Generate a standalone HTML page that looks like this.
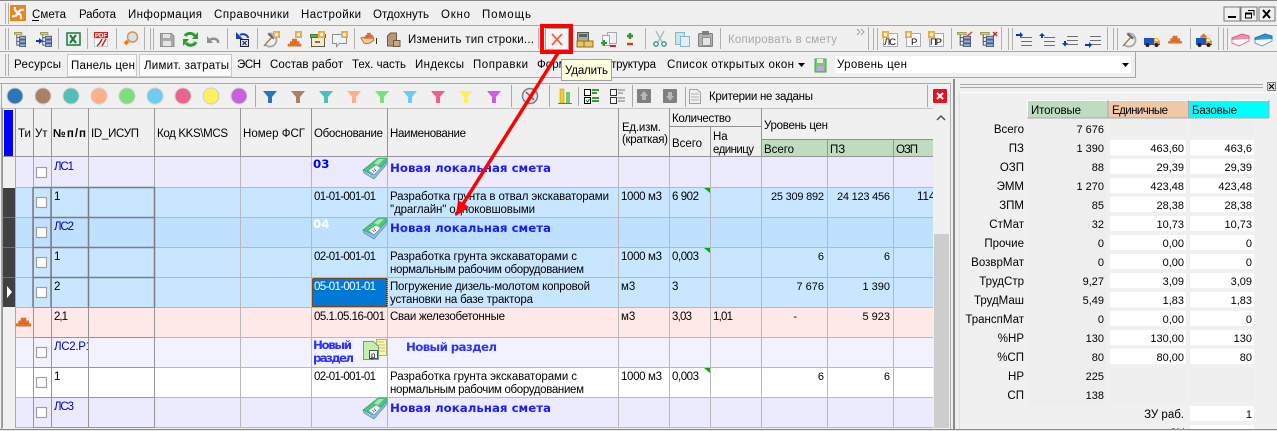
<!DOCTYPE html>
<html><head><meta charset="utf-8"><style>
html,body{margin:0;padding:0;background:#f0f0f0;width:1277px;height:431px;overflow:hidden}
svg{display:block}
text{font-family:"Liberation Sans","DejaVu Sans",sans-serif;font-size:11.5px;fill:#000}
.b{font-family:"DejaVu Sans","Liberation Sans",sans-serif;font-weight:bold;font-size:11.8px;fill:#1a1aff}
.g{fill:#a8a8a8}
.e{text-anchor:end;font-size:11px}
.l{font-size:11.5px}
.bl{fill:#0000c8}
</style></head><body>
<svg width="1277" height="431" viewBox="0 0 1277 431" xmlns="http://www.w3.org/2000/svg">
<defs>
<clipPath id="gc"><rect x="0" y="108" width="933" height="320"/></clipPath>
<clipPath id="rc"><rect x="955" y="93" width="322" height="336"/></clipPath>
<symbol id="tree" viewBox="0 0 13 16" preserveAspectRatio="none" overflow="visible"><rect x=".5" y=".5" width="8" height="2" fill="#e8e050" stroke="#9a9a50"/><path d="M3 3V14.500M3 6H6M3 10H6M3 14H6" stroke="#556" fill="none"/><path d="M6 4.500h6.500v3H6zM6 8.500h6.500v3H6zM6 12.500h6.500v3H6z" fill="#9ab0d4" stroke="#4a6088"/></symbol>
<symbol id="gear" viewBox="0 0 8 8" overflow="visible"><rect width="8" height="8" fill="#f4a83e"/><circle cx="4" cy="4" r="2" fill="#fff"/></symbol>
<symbol id="brick" viewBox="0 0 18 11" overflow="visible"><path d="M6 0h6v3H6zM3 3.500h6v3H3zM9.500 3.500h6v3h-6zM0 7h6v3H0zM6.500 7h5.500v3H6.500zM12.500 7H18v3h-5.500z" fill="#ec7428" stroke="#c05010" stroke-width=".5"/></symbol>
<symbol id="truck" viewBox="0 0 16 11" overflow="visible"><path d="M0 2h10v6H0z" fill="#1458c8"/><path d="M10 2h3l3 3v3h-6z" fill="#e8a030"/><path d="M11 3h2l1.500 2H11z" fill="#e8f4ff"/><path d="M0 8h16v1H0z" fill="#555"/><circle cx="3.500" cy="9" r="2" fill="#222"/><circle cx="12.500" cy="9" r="2" fill="#222"/></symbol>
<symbol id="hammer" viewBox="0 0 16 16" overflow="visible"><path d="M5 2a7 7 0 1 1-3 11" fill="none" stroke="#aaa" stroke-width="2"/><path d="M1 15L10 5" stroke="#a07840" stroke-width="1.500"/><path d="M6 2l6 5" stroke="#666" stroke-width="2.500"/></symbol>
<symbol id="note" viewBox="0 0 24 21" overflow="visible"><path d="M0 12L15 0h9v3L11 17z" fill="#4fc47c" stroke="#2c9a60" stroke-width=".6"/><path d="M11 5l5-4h5l-6 6z" fill="#a0eab8"/><path d="M6 12.500l7-5 5 3-7 6z" fill="#fff"/><path d="M9.500 12.500l3-2M10.500 14l3-2" stroke="#222" stroke-dasharray="1 1"/><path d="M0 12l11 5L24 3v3L11 21 1 15z" fill="#8cc0e4" stroke="#5c8cb0" stroke-width=".7"/></symbol>
<symbol id="fil" viewBox="0 0 14 12" overflow="visible"><path d="M0 0h14L9 6v6H5V6z"/></symbol>
</defs>

<rect width="1277" height="431" fill="#f0f0f0"/>
<!-- frame lines -->
<rect x="0" y="0" width="1277" height="1" fill="#888"/>
<rect x="0" y="25" width="1277" height="1" fill="#a8a8a8"/>
<rect x="0" y="51" width="1277" height="1" fill="#a8a8a8"/>
<rect x="0" y="77" width="1135" height="1" fill="#a8a8a8"/>
<rect x="1135" y="52" width="1" height="26" fill="#a8a8a8"/>
<rect x="0" y="83" width="951" height="1" fill="#a8a8a8"/>
<!-- grips -->
<path d="M5.500 3V24M8.500 3V24M5.500 28V50M8.500 28V50M5.500 54V76M8.500 54V76M150.500 28V50M153.500 28V50M873.500 28V50M877.500 28V50M1008.500 28V50M1012.500 28V50M1113.500 28V50M1117.500 28V50M1223.500 28V50M1227.500 28V50" stroke="#b0b0b0" fill="none"/>
<!-- app logo -->
<rect x="10" y="5" width="16" height="16" fill="#ec8420"/>
<path d="M18 13Q14 11 15 7M18 13Q20 9 24 10M18 13Q22 15 21 19M18 13Q16 17 12 16" stroke="#fff" stroke-width="2.200" fill="none"/>
<!-- menu -->
<text x="32" y="18" textLength="34">Смета</text><rect x="32" y="20" width="7" height="1"/>
<text x="79" y="18" textLength="37">Работа</text>
<text x="128" y="18" textLength="74">Информация</text>
<text x="214" y="18" textLength="75">Справочники</text>
<text x="301" y="18" textLength="60">Настройки</text>
<text x="373" y="18" textLength="56">Отдохнуть</text>
<text x="441" y="18" textLength="29">Окно</text>
<text x="482" y="18" textLength="49">Помощь</text>
<!-- window controls -->
<rect x="1224" y="7" width="16" height="14" fill="#f0f0f0" stroke="#777"/><rect x="1241" y="7" width="16" height="14" fill="#f0f0f0" stroke="#777"/><rect x="1259" y="7" width="16" height="14" fill="#f0f0f0" stroke="#777"/>
<rect x="1228" y="16" width="8" height="2"/>
<path d="M1248 10.500h6v5M1245.500 13h6v5h-6zM1245.500 14h6" fill="none" stroke="#000"/>
<path d="M1263 10l7 8M1270 10l-7 8" stroke="#000" stroke-width="2"/>

<!-- toolbar 1 separators -->
<path d="M58.500 28V49M87.500 28V49M116.500 28V49M144.500 27V50M227.500 28V49M257.500 28V49M354.500 28V49M538.500 28V49M645.500 28V49M720.500 28V49M868.500 27V50M951.500 28V49M1001.500 27V50M1107.500 27V50M1190.500 28V49M1218.500 27V50" stroke="#b0b0b0" fill="none"/>
<!-- toolbar 1 icons -->
<use href="#tree" x="14" y="32" width="12" height="15"/>
<use href="#tree" x="40" y="32" width="12" height="15"/>
<path d="M36 41h4" stroke="#0838c8" stroke-width="2"/><path d="M39 38l4 3-4 3z" fill="#0838c8"/>
<rect x="67" y="33" width="13" height="12" fill="#e4f0e4" stroke="#207840" stroke-width="1.500"/><path d="M70 35l6 8M76 35l-6 8" stroke="#207840" stroke-width="2"/>
<rect x="94" y="32" width="14" height="6" fill="#d82020"/><text x="95" y="37.500" style="font-size:6px;font-weight:bold;fill:#fff">PDF</text><rect x="94.500" y="38.500" width="13" height="8" fill="#fff" stroke="#ccc"/><path d="M97 46q4-4 5-7M102 46q2-4 4-7" stroke="#d02020" stroke-width="1.500" fill="none"/>
<path d="M125 44l3-3" stroke="#e07820" stroke-width="3.500"/><circle cx="132.500" cy="37" r="5" fill="#cfe4f4" stroke="#e09040" stroke-width="1.500"/>
<path d="M160.500 33.500h11l2.500 2.500v10.500h-13.500z" fill="#a8a8a8" stroke="#909090"/><rect x="163" y="34" width="7" height="4" fill="#e4e4e4"/><rect x="163" y="41" width="8" height="5" fill="#e4e4e4"/>
<path d="M185 36a6 6 0 0 1 10 0M196 42a6 6 0 0 1-10 1" stroke="#28a028" stroke-width="3" fill="none"/><path d="M198 32v7h-6zM183 46v-7h6z" fill="#28a028"/>
<path d="M209 41a5 4 0 0 1 9 0v2" stroke="#909090" stroke-width="2.500" fill="none"/><path d="M207 36v7h6z" fill="#909090"/>
<path d="M240 35a5 4 0 0 1 8 3" stroke="#1840c0" stroke-width="2" fill="none"/><path d="M236 32v7h7z" fill="#1840c0"/>
<rect x="240.500" y="39.500" width="8" height="7" fill="#dde" stroke="#224"/><path d="M242.500 41l4 4M246.500 41l-4 4" stroke="#224"/>
<use href="#hammer" x="263" y="32" width="15" height="15"/><use href="#gear" x="273" y="31" width="7" height="7"/>
<use href="#brick" x="286" y="39" width="17" height="8"/><use href="#gear" x="295" y="31" width="7" height="7"/>
<rect x="310.500" y="34.500" width="15" height="3" fill="#5ca85c" stroke="#408040"/><rect x="311.500" y="37.500" width="13" height="9" fill="#f4ecc8" stroke="#606040"/><path d="M315 42h5" stroke="#000"/><use href="#gear" x="318" y="31" width="7" height="7"/>
<path d="M332.500 34.500h14v9h-7l-3 3v-3h-4z" fill="#eaf6fa" stroke="#909090"/><use href="#gear" x="341" y="31" width="7" height="7"/>
<path d="M361 38q7-2 12 0l1 2q-5 5-10 3z" fill="#f4d0a0" stroke="#c87030"/><use href="#brick" x="364" y="33" width="10" height="6"/><path d="M376.500 38v6" stroke="#333"/>
<path d="M387.500 36l3-3h6v8h-3v5h-6z" fill="#b89878" stroke="#705840"/><rect x="393.500" y="40.500" width="6.500" height="6" fill="#c8a888" stroke="#705840"/>
<text x="408" y="43" textLength="126">Изменить тип строки...</text>
<rect x="545.500" y="28.500" width="23" height="21" fill="#f4f4f4" stroke="#a8a8a8"/>
<path d="M552 34l10 11M562 34l-10 11" stroke="#f06040" stroke-width="1.700"/>
<rect x="577.500" y="32.500" width="11" height="11" fill="#b8a888" stroke="#605840"/><rect x="579" y="34" width="8" height="3" fill="#406878"/><path d="M583 41h10v6H583z" fill="#e8c860" stroke="#907020"/><path d="M577 41h7v6h-7z" fill="#e8c860" stroke="#907020"/>
<rect x="607.500" y="32.500" width="9" height="11" fill="#eef" stroke="#aaa"/><path d="M602.500 35.500h7v10h-7z" fill="#fff" stroke="#aaa"/><path d="M601 43h6M604 40v6" stroke="#28a028" stroke-width="2"/><path d="M610 46h6" stroke="#d82020" stroke-width="2"/>
<path d="M627 36h6M630 33v6" stroke="#30902c" stroke-width="2.500"/><path d="M627 44h6" stroke="#d84020" stroke-width="2.500"/>
<path d="M656 31l6 11M664 31l-6 11" stroke="#a8c0c0" stroke-width="1.500"/><circle cx="656" cy="44" r="2.200" fill="none" stroke="#309090" stroke-width="1.300"/><circle cx="664" cy="44" r="2.200" fill="none" stroke="#309090" stroke-width="1.300"/>
<rect x="675.500" y="32.500" width="9" height="12" fill="#c8e4ec" stroke="#88b4c4"/><rect x="680.500" y="36.500" width="9" height="10" fill="#e0f0f4" stroke="#88b4c4"/>
<rect x="698.500" y="33.500" width="14" height="13" rx="1" fill="#b0b0b0" stroke="#808080"/><rect x="702" y="31" width="7" height="4" fill="#808080"/><rect x="702.500" y="37.500" width="8" height="8" fill="#e4e4e4" stroke="#909090"/>
<text x="728" y="43" textLength="109" class="g">Копировать в смету</text>
<path d="M857 29l3 3-3 3M861 29l3 3-3 3" stroke="#a0a0a0" fill="none"/>
<rect x="883.500" y="33.500" width="14" height="13" fill="#fff" stroke="#a8a8c0"/><use href="#gear" x="882" y="31" width="7" height="7"/><text x="884" y="45" style="font-size:9.500px" textLength="12">ЛС</text>
<rect x="906.500" y="33.500" width="14" height="13" fill="#fff" stroke="#a8a8c0"/><use href="#gear" x="905" y="31" width="7" height="7"/><text x="911" y="45" style="font-size:9.500px">Р</text>
<rect x="929.500" y="33.500" width="14" height="13" fill="#fff" stroke="#a8a8c0"/><use href="#gear" x="928" y="31" width="7" height="7"/><text x="930" y="45" style="font-size:9.500px" textLength="12">ПР</text>
<use href="#tree" x="957" y="32" width="14" height="15"/><path d="M966 37l6-5" stroke="#e05020" stroke-width="1.500"/>
<use href="#tree" x="980" y="32" width="14" height="15"/><path d="M993 32l4 4M997 32l-4 4" stroke="#e02020" stroke-width="1.500"/>
<path d="M1021 37.500h11M1021 41.500h11M1021 45.500h11" stroke="#707070"/><path d="M1016 35h5" stroke="#0838c8" stroke-width="2"/><path d="M1020 32l3 3-3 3z" fill="#0838c8"/>
<path d="M1044 37.500h11M1044 41.500h11M1044 45.500h11" stroke="#707070"/><path d="M1042 38v-3" stroke="#0838c8" stroke-width="2"/><path d="M1039 36l3-3 3 3z" fill="#0838c8"/>
<path d="M1067 36.500h11M1067 40.500h11M1067 44.500h11" stroke="#707070"/><path d="M1065 41v3" stroke="#0838c8" stroke-width="2"/><path d="M1062 43l3 3.500 3-3.500z" fill="#0838c8"/>
<path d="M1090 36.500h11M1090 40.500h11M1090 44.500h11" stroke="#707070"/><path d="M1085 45h5" stroke="#0838c8" stroke-width="2"/><path d="M1089 42l3 3-3 3z" fill="#0838c8"/>
<use href="#hammer" x="1122" y="32" width="15" height="15"/>
<use href="#truck" x="1144" y="36" width="16" height="11"/>
<use href="#brick" x="1167" y="36" width="16" height="8"/>
<use href="#brick" x="1199" y="34" width="9" height="4"/>
<use href="#truck" x="1196" y="36" width="16" height="11"/>
<path d="M1232 38l10-4 7 2v3l-10 5-7-2z" fill="#f090a8" stroke="#d86078"/><path d="M1232 40v3l7 3 10-5v-2" fill="#fff" stroke="#e07890"/>
<path d="M1255 38l10-4 7 2v3l-10 5-7-2z" fill="#3890d8" stroke="#2070b8"/><path d="M1255 40v3l7 3 10-5v-2" fill="#fff" stroke="#58a0d8"/>

<!-- toolbar 2 -->
<text x="14" y="68" textLength="47">Ресурсы</text>
<rect x="67.500" y="54.500" width="69" height="22" fill="#fafafa" stroke="#c8c8c8"/>
<rect x="139.500" y="54.500" width="92" height="22" fill="#fafafa" stroke="#c8c8c8"/>
<text x="71" y="69" textLength="64">Панель цен</text>
<text x="144" y="69" textLength="85">Лимит. затраты</text>
<text x="237" y="68" textLength="24">ЭСН</text>
<text x="270" y="68" textLength="73">Состав работ</text>
<text x="352" y="68" textLength="54">Тех. часть</text>
<text x="415" y="68" textLength="49">Индексы</text>
<text x="473" y="68" textLength="55">Поправки</text>
<text x="537" y="68" textLength="36">Форма</text>
<text x="603" y="68" textLength="53">Структура</text>
<text x="667" y="68" textLength="127">Список открытых окон</text>
<path d="M798 63h7l-3.500 4z" fill="#000"/>
<rect x="815" y="59" width="11" height="13" fill="#78c878" stroke="#50a050"/><rect x="817" y="59" width="6" height="4" fill="#e0f0e0"/><rect x="817" y="66" width="7" height="5" fill="#c8a0e8"/>
<rect x="835" y="56" width="296" height="17" fill="#fff"/>
<text x="837" y="68" textLength="70">Уровень цен</text>
<path d="M1122 63h7l-3.500 4z" fill="#000"/>

<!-- filter bar -->
<g stroke="#d0d0d0" stroke-width="1">
<circle cx="15" cy="96" r="8" fill="#2f73b8"/><circle cx="43" cy="96" r="8" fill="#a98068"/><circle cx="71" cy="96" r="8" fill="#50bfb8"/><circle cx="99" cy="96" r="8" fill="#ffb08a"/><circle cx="127" cy="96" r="8" fill="#7fdc7f"/><circle cx="155" cy="96" r="8" fill="#6fcbf0"/><circle cx="183" cy="96" r="8" fill="#e8648c"/><circle cx="211" cy="96" r="8" fill="#fdf060"/><circle cx="239" cy="96" r="8" fill="#c860e0"/>
</g>
<path d="M255.500 85V107M511.500 85V107M549.500 85V107M578.500 87V106M632.500 85V107M685.500 87V107M927.500 85V107" stroke="#a8a8a8"/>
<use href="#fil" x="263" y="91" width="14" height="12" fill="#2f73b8"/>
<use href="#fil" x="291" y="91" width="14" height="12" fill="#a98068"/>
<use href="#fil" x="319" y="91" width="14" height="12" fill="#50bfb8"/>
<use href="#fil" x="347" y="91" width="14" height="12" fill="#ffb08a"/>
<use href="#fil" x="375" y="91" width="14" height="12" fill="#7fdc7f"/>
<use href="#fil" x="403" y="91" width="14" height="12" fill="#6fcbf0"/>
<use href="#fil" x="431" y="91" width="14" height="12" fill="#e8648c"/>
<use href="#fil" x="459" y="91" width="14" height="12" fill="#fdf060"/>
<use href="#fil" x="487" y="91" width="14" height="12" fill="#c860e0"/>
<circle cx="530" cy="96" r="7.500" fill="#e8e8e8" stroke="#808080" stroke-width="1.500"/><path d="M526 92l8 8" stroke="#a05050" stroke-width="1.500"/>
<rect x="560" y="89" width="4" height="14" fill="#f0d020" stroke="#b09010" stroke-width=".5"/><rect x="566" y="92" width="4" height="11" fill="#70c870"/><path d="M558 103.500h14" stroke="#28a028"/>
<rect x="584.500" y="89.500" width="6" height="6" fill="#fff" stroke="#000"/><rect x="584.500" y="97.500" width="6" height="6" fill="#fff" stroke="#000"/><path d="M586 100l1.500 2 2-3" stroke="#080" fill="none"/><path d="M592 90h7M592 93h5M592 98h7M592 101h7" stroke="#087008" stroke-width="1.500"/>
<rect x="610.500" y="89.500" width="6" height="6" fill="#fff" stroke="#333"/><rect x="610.500" y="97.500" width="6" height="6" fill="#fff" stroke="#333"/><path d="M618 90h7M618 93h5M618 98h7M618 101h7" stroke="#a0a0a0" stroke-width="1.500"/>
<rect x="637" y="89" width="14" height="14" rx="1" fill="#808080"/><path d="M644 91l4 5h-2v4h-4v-4h-2z" fill="#b8b8b8"/>
<rect x="663" y="89" width="14" height="14" rx="1" fill="#808080"/><path d="M670 101l4-5h-2v-4h-4v4h-2z" fill="#b8b8b8"/>
<path d="M689.500 89.500h8l3 3v11h-11z" fill="#f0f0f0" stroke="#a0a0a0"/><path d="M691 94h8M691 97h8M691 100h8" stroke="#b0b0b0"/>
<text x="709" y="100" textLength="104">Критерии не заданы</text>
<rect x="933" y="89" width="14" height="14" rx="1" fill="#e81020"/><path d="M937 93l6 6M943 93l-6 6" stroke="#fff" stroke-width="2"/>

<!-- grid -->
<rect x="3" y="108" width="930" height="49" fill="#f0f0f0"/>
<g clip-path="url(#gc)">
<rect x="3" y="157" width="930" height="30" fill="#ebebfd"/>
<rect x="3" y="187" width="930" height="30" fill="#c8e6ff"/>
<rect x="3" y="217" width="930" height="30" fill="#c0e0ff"/>
<rect x="3" y="247" width="930" height="60" fill="#c8e6ff"/>
<rect x="3" y="307" width="930" height="30" fill="#ffe8e8"/>
<rect x="3" y="337" width="930" height="30" fill="#f2f2ff"/>
<rect x="3" y="367" width="930" height="30" fill="#fff"/>
<rect x="3" y="397" width="930" height="30" fill="#ebebfd"/>
<rect x="3" y="157" width="12" height="270" fill="#f0f0f0"/>
<rect x="3" y="188" width="12" height="119" fill="#404040"/>
<path d="M3 217.500H15M3 247.500H15M3 277.500H15" stroke="#707070"/>
<path d="M7 286v12l5-6z" fill="#fff"/>
<rect x="4" y="110" width="9" height="46" fill="#0000ff"/>
<!-- green header cells -->
<rect x="762" y="140" width="171" height="17" fill="#c0dcc0"/>
<!-- horizontal lines -->
<path d="M15 187.500H933M15 217.500H933M15 247.500H933M15 277.500H933M15 307.500H933M15 337.500H933M15 367.500H933M15 397.500H933M15 427.500H933" stroke="#b8b8b8"/>
<path d="M3 156.500H933" stroke="#959595"/>
<path d="M33 187.500H155M33 217.500H155M33 247.500H155M33 277.500H155" stroke="#7c7c7c" stroke-width="1.500"/>
<path d="M33 307.500H155M33 337.500H155M33 367.500H155M33 397.500H155M33 427.500H155" stroke="#959595"/>
<path d="M669 126.500H762M762 139.500H933" stroke="#909090"/>
<!-- vertical lines -->
<path d="M240.500 157V428M311.500 157V428M387.500 157V428M618.500 157V428M669.500 157V428M710.500 157V428M761.500 157V428M827.500 157V428M893.500 157V428" stroke="#b8b8b8"/>
<path d="M15.500 157V428M33.500 157V428M51.500 157V428M88.500 157V428M154.500 157V428" stroke="#a8a8a8"/>
<path d="M33 187V307M51 187V307M88.500 187V307M154.500 187V307" stroke="#7c7c7c" stroke-width="1.500"/>
<path d="M33.500 307V428M51.500 307V428M88.500 307V428M154.500 307V428" stroke="#959595"/>
<path d="M15.500 108V157M33.500 108V157M51.500 108V157M88.500 108V157M154.500 108V157M240.500 108V157M311.500 108V157M387.500 108V157M618.500 108V157M669.500 108V157M710.500 127V157M761.500 108V157M827.500 140V157M893.500 140V157" stroke="#959595"/>
<rect x="0" y="107.500" width="933" height="1" fill="#959595"/>
<!-- header text -->
<text x="18" y="137">Ти</text>
<text x="35" y="137">Ут</text>
<text x="53" y="137" textLength="33" font-weight="bold">№п/п</text>
<text x="91" y="137" textLength="48">ID_ИСУП</text>
<text x="157" y="137" textLength="71">Код KKS\MCS</text>
<text x="243" y="137" textLength="62">Номер ФСГ</text>
<text x="314" y="137" textLength="69">Обоснование</text>
<text x="390" y="137" textLength="76">Наименование</text>
<text x="622" y="131" textLength="39">Ед.изм.</text>
<text x="622" y="143" textLength="46">(краткая)</text>
<text x="672" y="122" textLength="59">Количество</text>
<text x="672" y="147" textLength="30">Всего</text>
<text x="713" y="140">На</text>
<text x="713" y="153" textLength="41">единицу</text>
<text x="764" y="129" textLength="64">Уровень цен</text>
<text x="764" y="153" textLength="30">Всего</text>
<text x="830" y="153">ПЗ</text>
<text x="896" y="153" textLength="22">ОЗП</text>
<!-- checkboxes -->
<g fill="#fff" stroke="#a0a0a0" stroke-width="1.200">
<rect x="36.500" y="167.500" width="10" height="10"/><rect x="36.500" y="197.500" width="10" height="10"/><rect x="36.500" y="227.500" width="10" height="10"/><rect x="36.500" y="257.500" width="10" height="10"/><rect x="36.500" y="287.500" width="10" height="10"/><rect x="36.500" y="347.500" width="10" height="10"/><rect x="36.500" y="377.500" width="10" height="10"/><rect x="36.500" y="407.500" width="10" height="10"/>
</g>
<!-- row 1 -->
<text x="54" y="170" class="bl" textLength="20">ЛС1</text>
<text x="313" y="168" class="b" style="fill:#0000ff">03</text>
<use href="#note" x="363" y="158" width="24" height="21"/>
<text x="390" y="172" class="b" textLength="161">Новая локальная смета</text>
<!-- row 2 -->
<text x="54" y="200">1</text>
<text x="314" y="200" textLength="62">01-01-001-01</text>
<text x="390" y="200" textLength="219">Разработка грунта в отвал экскаваторами</text>
<text x="390" y="213" textLength="145">''драглайн'' одноковшовыми</text>
<text x="621" y="200" textLength="41">1000 м3</text>
<text x="672" y="200" textLength="27">6 902</text>
<path d="M704 188h6v5z" fill="#00b000"/>
<text x="824" y="200" class="e" textLength="53">25 309 892</text>
<text x="890" y="200" class="e" textLength="53">24 123 456</text>
<text x="917" y="200">114 000</text>
<!-- row 3 -->
<text x="54" y="230" class="bl" textLength="20">ЛС2</text>
<text x="313" y="228" class="b" style="fill:#fff">04</text>
<use href="#note" x="363" y="218" width="24" height="21"/>
<text x="390" y="232" class="b" textLength="161">Новая локальная смета</text>
<!-- row 4 -->
<text x="54" y="260">1</text>
<text x="314" y="260" textLength="62">02-01-001-01</text>
<text x="390" y="260" textLength="187">Разработка грунта экскаваторами с</text>
<text x="390" y="273" textLength="194">нормальным рабочим оборудованием</text>
<text x="621" y="260" textLength="41">1000 м3</text>
<text x="672" y="260" textLength="27">0,003</text>
<path d="M704 248h6v5z" fill="#00b000"/>
<text x="824" y="260" class="e">6</text>
<text x="890" y="260" class="e">6</text>
<!-- row 5 -->
<text x="54" y="290">2</text>
<rect x="312.500" y="278" width="75" height="29" fill="#0078d7"/>
<rect x="312.500" y="278.500" width="74.500" height="28" fill="none" stroke="#000" stroke-width="1"/>
<rect x="312.500" y="278.500" width="74.500" height="28" fill="none" stroke="#f09030" stroke-width="1" stroke-dasharray="1 1"/>
<text x="314" y="290" textLength="62" style="fill:#fff">05-01-001-01</text>
<text x="390" y="290" textLength="200">Погружение дизель-молотом копровой</text>
<text x="390" y="303" textLength="143">установки на базе трактора</text>
<text x="621" y="290">м3</text>
<text x="672" y="290">3</text>
<text x="824" y="290" class="e">7 676</text>
<text x="890" y="290" class="e">1 390</text>
<!-- row 6 -->
<use href="#brick" x="16" y="318" width="15" height="9"/>
<text x="54" y="320" textLength="14">2,1</text>
<text x="314" y="320" textLength="71">05.1.05.16-001</text>
<text x="390" y="320" textLength="115">Сваи железобетонные</text>
<text x="621" y="320">м3</text>
<text x="672" y="320" textLength="20">3,03</text>
<text x="713" y="320" textLength="20">1,01</text>
<text x="797" y="320" class="e">-</text>
<text x="890" y="320" class="e">5 923</text>
<!-- row 7 -->
<svg x="54" y="340" width="34" height="20" overflow="hidden"><text x="0" y="10" class="bl" textLength="38">ЛС2.Р1</text></svg>
<text x="313" y="349" class="b" style="fill:#3030ff" textLength="39">Новый</text>
<text x="313" y="362" class="b" style="fill:#3030ff" textLength="41">раздел</text>
<rect x="376.500" y="339.500" width="10" height="16" fill="#fdf8b0" stroke="#b0b070"/>
<path d="M376 342h8M377 345h8M377 348h8M379 351h6" stroke="#c8c070"/>
<path d="M363.500 341.500h10l5 5v13h-15z" fill="#c4f0ac" stroke="#70a070"/>
<rect x="369.500" y="350.500" width="8" height="8" fill="#fff" stroke="#555"/><text x="371" y="358" style="font-size:8px">р</text>
<text x="406" y="351" class="b" style="fill:#3030ff" textLength="91">Новый раздел</text>
<!-- row 8 -->
<text x="54" y="380">1</text>
<text x="314" y="380" textLength="62">02-01-001-01</text>
<text x="390" y="380" textLength="187">Разработка грунта экскаваторами с</text>
<text x="390" y="393" textLength="194">нормальным рабочим оборудованием</text>
<text x="621" y="380" textLength="41">1000 м3</text>
<text x="672" y="380" textLength="27">0,003</text>
<path d="M704 368h6v5z" fill="#00b000"/>
<text x="824" y="380" class="e">6</text>
<text x="890" y="380" class="e">6</text>
<!-- row 9 -->
<text x="54" y="410" class="bl" textLength="20">ЛС3</text>
<use href="#note" x="363" y="398" width="24" height="21"/>
<text x="390" y="412" class="b" textLength="161">Новая локальная смета</text>
</g>
<!-- grid frame left -->
<rect x="1" y="84" width="1" height="345" fill="#a8a8a8"/>
<rect x="2" y="108" width="1" height="320" fill="#959595"/>
<rect x="950" y="84" width="1" height="345" fill="#b0b0b0"/>
<!-- scrollbar -->
<rect x="933" y="108" width="17" height="320" fill="#f0f0f0"/>
<path d="M937 120l4-4 4 4" stroke="#505050" stroke-width="1.500" fill="none"/>
<rect x="934" y="234" width="15" height="194" fill="#cdcdcd"/>
<!-- splitter -->
<rect x="953" y="79" width="2" height="350" fill="#8a8a8a"/>
<!-- right panel -->
<path d="M960 84.500H1263M960 87.500H1263" stroke="#a8a8a8"/>
<rect x="1267.500" y="82.500" width="8" height="8" fill="#e0e0e0" stroke="#808080"/>
<path d="M1269 84l5 5M1274 84l-5 5" stroke="#000"/>
<rect x="959" y="92" width="318" height="1" fill="#fff"/>
<rect x="959" y="92" width="1" height="337" fill="#e0e0e0"/>
<rect x="1027" y="100" width="81" height="18" fill="#c0dcc0"/><rect x="1108.500" y="100" width="80" height="18" fill="#eec8a8"/><rect x="1189" y="100" width="80" height="18" fill="#00ffff"/>
<path d="M1027 100.500H1269M1027.500 100V118" stroke="#fff"/><path d="M1027 118H1269M1108 100V118M1188.500 100V118M1269 100V118" stroke="#a8a8a8"/>
<text x="1031" y="114" textLength="50">Итоговые</text>
<text x="1112" y="114" textLength="56">Единичные</text>
<text x="1192" y="114" textLength="45">Базовые</text>
<g clip-path="url(#rc)">
<!-- total backgrounds -->
<rect x="1029" y="121" width="77" height="284" fill="#eeeeee"/>
<rect x="1110" y="121" width="76" height="15" fill="#eeeeee"/><rect x="1190" y="121" width="64" height="15" fill="#eeeeee"/>
<rect x="1110" y="368" width="76" height="34" fill="#eeeeee"/><rect x="1190" y="368" width="64" height="34" fill="#eeeeee"/>
<g fill="#fff">
<rect x="1110" y="140" width="76" height="15"/><rect x="1190" y="140" width="64" height="15"/>
<rect x="1110" y="159" width="76" height="15"/><rect x="1190" y="159" width="64" height="15"/>
<rect x="1110" y="178" width="76" height="15"/><rect x="1190" y="178" width="64" height="15"/>
<rect x="1110" y="197" width="76" height="15"/><rect x="1190" y="197" width="64" height="15"/>
<rect x="1110" y="216" width="76" height="15"/><rect x="1190" y="216" width="64" height="15"/>
<rect x="1110" y="235" width="76" height="15"/><rect x="1190" y="235" width="64" height="15"/>
<rect x="1110" y="254" width="76" height="15"/><rect x="1190" y="254" width="64" height="15"/>
<rect x="1110" y="273" width="76" height="15"/><rect x="1190" y="273" width="64" height="15"/>
<rect x="1110" y="292" width="76" height="15"/><rect x="1190" y="292" width="64" height="15"/>
<rect x="1110" y="311" width="76" height="15"/><rect x="1190" y="311" width="64" height="15"/>
<rect x="1110" y="330" width="76" height="15"/><rect x="1190" y="330" width="64" height="15"/>
<rect x="1110" y="349" width="76" height="15"/><rect x="1190" y="349" width="64" height="15"/>
<rect x="1190" y="406" width="64" height="15"/><rect x="1190" y="425" width="64" height="15"/>
</g>
<text x="1024" y="133" class="e l">Всего</text><text x="1104" y="133" class="e">7 676</text>
<text x="1024" y="152" class="e l">ПЗ</text><text x="1104" y="152" class="e">1 390</text><text x="1184" y="152" class="e">463,60</text><text x="1252" y="152" class="e">463,6</text>
<text x="1024" y="171" class="e l">ОЗП</text><text x="1104" y="171" class="e">88</text><text x="1184" y="171" class="e">29,39</text><text x="1252" y="171" class="e">29,39</text>
<text x="1024" y="190" class="e l">ЭММ</text><text x="1104" y="190" class="e">1 270</text><text x="1184" y="190" class="e">423,48</text><text x="1252" y="190" class="e">423,48</text>
<text x="1024" y="209" class="e l">ЗПМ</text><text x="1104" y="209" class="e">85</text><text x="1184" y="209" class="e">28,38</text><text x="1252" y="209" class="e">28,38</text>
<text x="1024" y="228" class="e l">СтМат</text><text x="1104" y="228" class="e">32</text><text x="1184" y="228" class="e">10,73</text><text x="1252" y="228" class="e">10,73</text>
<text x="1024" y="247" class="e l">Прочие</text><text x="1104" y="247" class="e">0</text><text x="1184" y="247" class="e">0,00</text><text x="1252" y="247" class="e">0</text>
<text x="1024" y="266" class="e l">ВозврМат</text><text x="1104" y="266" class="e">0</text><text x="1184" y="266" class="e">0,00</text><text x="1252" y="266" class="e">0</text>
<text x="1024" y="285" class="e l">ТрудСтр</text><text x="1104" y="285" class="e">9,27</text><text x="1184" y="285" class="e">3,09</text><text x="1252" y="285" class="e">3,09</text>
<text x="1024" y="304" class="e l">ТрудМаш</text><text x="1104" y="304" class="e">5,49</text><text x="1184" y="304" class="e">1,83</text><text x="1252" y="304" class="e">1,83</text>
<text x="1024" y="323" class="e l">ТранспМат</text><text x="1104" y="323" class="e">0</text><text x="1184" y="323" class="e">0,00</text><text x="1252" y="323" class="e">0</text>
<text x="1024" y="342" class="e l">%НР</text><text x="1104" y="342" class="e">130</text><text x="1184" y="342" class="e">130,00</text><text x="1252" y="342" class="e">130</text>
<text x="1024" y="361" class="e l">%СП</text><text x="1104" y="361" class="e">80</text><text x="1184" y="361" class="e">80,00</text><text x="1252" y="361" class="e">80</text>
<text x="1024" y="380" class="e l">НР</text><text x="1104" y="380" class="e">225</text>
<text x="1024" y="399" class="e l">СП</text><text x="1104" y="399" class="e">138</text>
<text x="1184" y="418" class="e l">ЗУ раб.</text><text x="1252" y="418" class="e">1</text>
<text x="1184" y="437" class="e l">ЗУ</text><text x="1252" y="437" class="e">1</text>
</g>
<!-- bottom line -->
<rect x="0" y="429" width="1277" height="1" fill="#8a8a8a"/>
<rect x="0" y="430" width="1277" height="1" fill="#e8e8e8"/>

<!-- annotation -->
<path d="M558 53L463 204" stroke="#ff0000" stroke-width="3.500" fill="none"/>
<path d="M456 216l2-16 11 7z" fill="#ff0000"/>
<rect x="542" y="26" width="29" height="26" fill="none" stroke="#ff0000" stroke-width="4"/>
<rect x="561.500" y="59.500" width="50" height="21" fill="#ffffe1" stroke="#a0a0a0"/>
<text x="565" y="74" textLength="43">Удалить</text>
</svg>
</body></html>
